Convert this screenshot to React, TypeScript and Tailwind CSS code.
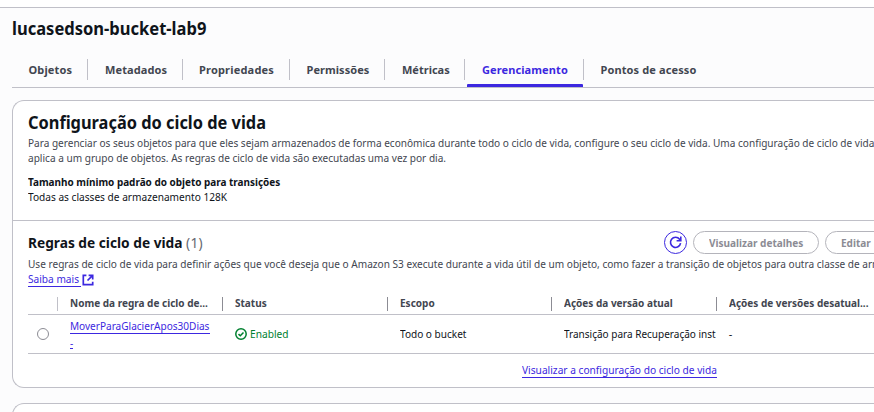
import type { ReactNode } from "react";

type Tab = { label: string; box: string; active?: boolean };

const tabs: Tab[] = [
  { label: "Objetos", box: "w-[76px] pl-[16.5px] tracking-[0.13px]" },
  { label: "Metadados", box: "w-[95px] pl-[17px] tracking-[0.1px]" },
  { label: "Propriedades", box: "w-[107px] pl-4 tracking-[0.19px]" },
  { label: "Permissões", box: "w-[95px] pl-[16.5px] tracking-[0.05px]" },
  { label: "Métricas", box: "w-[80px] pl-[17px] tracking-normal" },
  { label: "Gerenciamento", box: "w-[119px] pl-[17px] tracking-[0.1px]", active: true },
  { label: "Pontos de acesso", box: "w-[130px] pl-[16.5px] tracking-[0.12px]" },
];

// Semi-condensed text: glyphs are squeezed towards their left edge.
function Narrow({ children, fit = "scale-x-[0.914]" }: { children: ReactNode; fit?: string }) {
  return <span className={`block w-max origin-left ${fit}`}>{children}</span>;
}

function TabItem({ tab, last }: { tab: Tab; last: boolean }) {
  return (
    <div className={`relative flex h-full shrink-0 pt-[3px] ${tab.box}`}>
      <span className={`font-bold ${tab.active ? "text-[#3c28e0]" : "text-[#424650]"}`}>{tab.label}</span>
      {!last && <span className="absolute right-0 top-0 h-[21px] w-px bg-[#c0c0c8]" />}
      {tab.active && <span className="absolute bottom-0 left-[2px] right-px h-[3px] rounded-t-[1px] bg-[#3c28e0]" />}
    </div>
  );
}

function HeaderCell({ children, box = "w-[164.6px] border-[#8c8c94]" }: { children: string; box?: string }) {
  return (
    <div className={`h-[14px] shrink-0 border-l pl-3 font-bold leading-[12px] text-[#424650] ${box}`}>
      <Narrow fit="scale-x-[0.91]">{children}</Narrow>
    </div>
  );
}

function ExternalIcon() {
  return (
    <svg width="12" height="12" viewBox="0 0 12 12" fill="none" stroke="#3c28e0" strokeWidth="1.7">
      <path d="M4.4 1.3H1.3v9.4h9.4V7.8" />
      <path d="M6.6 1.3h4.1v4.1M10.7 1.3 5.5 6.5" />
    </svg>
  );
}

function RefreshIcon() {
  return (
    <svg width="13" height="13" viewBox="0 0 13 13" fill="none" stroke="#3c28e0" strokeWidth="1.6">
      <path d="M11.6 7.2a5.1 5.1 0 1 1-1-4L11.6 4.6" />
      <path d="M11.8.6v4.2H7.6" />
    </svg>
  );
}

function CheckIcon() {
  return (
    <svg width="12" height="12" viewBox="0 0 12 12" fill="none" stroke="#00802f" strokeWidth="1.5">
      <circle cx="6" cy="6" r="5.2" />
      <path d="M3.5 6.1 5.3 7.8l3.2-3.4" />
    </svg>
  );
}

export default function App() {
  return (
    <div className="flex h-[412px] w-[874px] flex-col overflow-hidden whitespace-nowrap bg-white pt-[7px] font-['Noto_Sans','Open_Sans',sans-serif] text-[11px] leading-[15px] text-[#0f141a]">
      <div className="flex flex-1 flex-col border-t border-[#c0c0c8] bg-[#fcfcfd] pl-3 pt-[9px]">
        <h1 className="h-[22px] text-[18px] font-bold leading-[22px]">
          <Narrow fit="scale-x-[0.918]">lucasedson-bucket-lab9</Narrow>
        </h1>

        <nav className="mt-5 flex h-[29px] shrink-0 border-b border-[#c0c0c8]">
          {tabs.map((tab, i) => (
            <TabItem key={tab.label} tab={tab} last={i === tabs.length - 1} />
          ))}
        </nav>

        <section className="mt-3 h-[288px] shrink-0 overflow-hidden rounded-l-xl border-y border-l border-[#c0c0c8] bg-white">
          <div className="h-[120px] border-b border-[#c0c0c8] pl-[15px] pt-[10px]">
            <h2 className="h-[22px] text-[18px] font-bold leading-[22px]">
              <Narrow fit="scale-x-[0.91]">Configuração do ciclo de vida</Narrow>
            </h2>
            <div className="mt-[2px] text-[#424650]">
              <Narrow fit="scale-x-[0.914]">
                Para gerenciar os seus objetos para que eles sejam armazenados de forma econômica durante todo o ciclo de vida, configure o seu ciclo de vida. Uma configuração de ciclo de vida
              </Narrow>
              <Narrow fit="scale-x-[0.916]">aplica a um grupo de objetos. As regras de ciclo de vida são executadas uma vez por dia.</Narrow>
            </div>
            <div className="mt-[9px] font-bold">
              <Narrow fit="scale-x-[0.904]">Tamanho mínimo padrão do objeto para transições</Narrow>
            </div>
            <Narrow fit="scale-x-[0.92]">Todas as classes de armazenamento 128K</Narrow>
          </div>

          <div className="pl-[15px] pt-[9px]">
            <div className="flex h-6 items-center">
              <h3 className="w-[636px] shrink-0 text-[15px] font-bold leading-[18px]">
                <Narrow fit="scale-x-[0.914]">
                  Regras de ciclo de vida <span className="font-normal tracking-[0.3px] text-[#656871]">(1)</span>
                </Narrow>
              </h3>
              <button className="flex size-[23px] shrink-0 items-center justify-center rounded-full border-[1.5px] border-[#3c28e0]">
                <RefreshIcon />
              </button>
              <button className="ml-[6px] h-[23px] w-[126px] shrink-0 rounded-full border border-[#b4b4bb] pl-[14.5px] text-left font-bold text-[#8c8c94]">
                <Narrow fit="scale-x-[0.912]">Visualizar detalhes</Narrow>
              </button>
              <button className="ml-[6px] h-[23px] w-[62px] shrink-0 rounded-full border border-[#b4b4bb] pl-[15px] text-left font-bold text-[#8c8c94]">
                <Narrow fit="scale-x-[0.912]">Editar</Narrow>
              </button>
            </div>
            <div className="mt-[2px] text-[#424650]">
              <Narrow fit="scale-x-[0.916]">
                Use regras de ciclo de vida para definir ações que você deseja que o Amazon S3 execute durante a vida útil de um objeto, como fazer a transição de objetos para outra classe de armazenamento
              </Narrow>
            </div>
            <a className="flex h-4 w-fit items-start text-[#3c28e0]">
              <span className="h-4 w-[53px] border-b border-[#3c28e0]"><Narrow fit="scale-x-[0.92]">Saiba mais</Narrow></span>
              <span className="ml-px mt-[3px]"><ExternalIcon /></span>
            </a>

            <div className="mt-[10px] flex h-[18px] border-b border-[#c0c0c8]">
              <div className="w-[29px] shrink-0" />
              <HeaderCell box="w-[165px] border-[#c0c0c8]">Nome da regra de ciclo de...</HeaderCell>
              <HeaderCell>Status</HeaderCell>
              <HeaderCell>Escopo</HeaderCell>
              <HeaderCell>Ações da versão atual</HeaderCell>
              <HeaderCell box="w-[157px] border-[#8c8c94]">Ações de versões desatual...</HeaderCell>
            </div>

            <div className="flex h-[39px] items-center border-b border-[#c0c0c8]">
              <div className="w-[42px] shrink-0 pl-[9px]">
                <span className="block size-3 rounded-full border border-[#8c8c94]" />
              </div>
              <div className="flex h-full w-[165px] shrink-0 flex-col items-start pt-[3px] text-[#3c28e0]">
                <a className="h-4 w-[140px] border-b border-[#3c28e0]"><Narrow>MoverParaGlacierApos30Dias</Narrow></a>
                <a className="mt-px h-[14px] w-[3px] border-b border-[#3c28e0]"><Narrow>-</Narrow></a>
              </div>
              <div className="flex w-[164.6px] shrink-0 items-center gap-[3px] text-[#00802f]">
                <CheckIcon />
                <span className="-mt-px"><Narrow fit="scale-x-[0.925]">Enabled</Narrow></span>
              </div>
              <div className="-mt-px w-[164.6px] shrink-0"><Narrow>Todo o bucket</Narrow></div>
              <div className="-mt-px w-[164.6px] shrink-0"><Narrow fit="scale-x-[0.91]">Transição para Recuperação inst</Narrow></div>
              <div className="-mt-px">-</div>
            </div>

            <div className="flex pl-[494px] pt-2">
              <a className="h-4 w-[195px] border-b border-[#3c28e0] text-[#3c28e0]">
                <Narrow fit="scale-x-[0.925]">Visualizar a configuração do ciclo de vida</Narrow>
              </a>
            </div>
          </div>
        </section>

        <section className="mt-[15px] h-[60px] shrink-0 rounded-tl-xl border-l border-t border-[#c0c0c8] bg-white" />
      </div>
    </div>
  );
}
